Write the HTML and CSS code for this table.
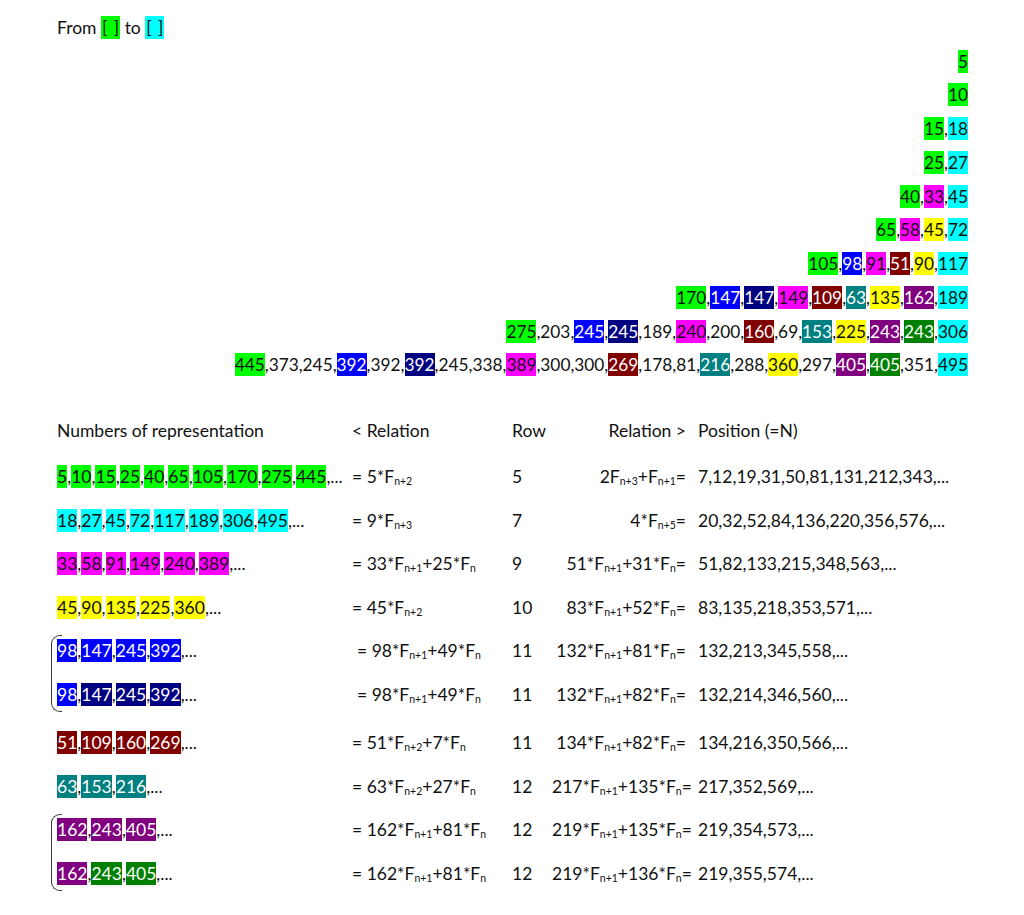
FILE: index.html
```html
<!DOCTYPE html>
<html>
<head>
<meta charset="utf-8">
<link rel="stylesheet" href="styles.css">
</head>
<body>
<div class="page">
  <div class="from">From <span class="h g blank">[ ]</span> to <span class="h c blank">[ ]</span></div>

  <div class="pyramid">
    <div class="prow"><span class="h g">5</span></div>
    <div class="prow"><span class="h g">10</span></div>
    <div class="prow"><span class="h g">15</span>,<span class="h c">18</span></div>
    <div class="prow"><span class="h g">25</span>,<span class="h c">27</span></div>
    <div class="prow"><span class="h g">40</span>,<span class="h m">33</span>,<span class="h c">45</span></div>
    <div class="prow"><span class="h g">65</span>,<span class="h m">58</span>,<span class="h y">45</span>,<span class="h c">72</span></div>
    <div class="prow"><span class="h g">105</span>,<span class="h b">98</span>,<span class="h m">91</span>,<span class="h mr">51</span>,<span class="h y">90</span>,<span class="h c">117</span></div>
    <div class="prow"><span class="h g">170</span>,<span class="h b">147</span>,<span class="h nv">147</span>,<span class="h m">149</span>,<span class="h mr">109</span>,<span class="h t">63</span>,<span class="h y">135</span>,<span class="h p">162</span>,<span class="h c">189</span></div>
    <div class="prow"><span class="h g">275</span>,203,<span class="h b">245</span>,<span class="h nv">245</span>,189,<span class="h m">240</span>,200,<span class="h mr">160</span>,69,<span class="h t">153</span>,<span class="h y">225</span>,<span class="h p">243</span>,<span class="h dg">243</span>,<span class="h c">306</span></div>
    <div class="prow"><span class="h g">445</span>,373,245,<span class="h b">392</span>,392,<span class="h nv">392</span>,245,338,<span class="h m">389</span>,300,300,<span class="h mr">269</span>,178,81,<span class="h t">216</span>,288,<span class="h y">360</span>,297,<span class="h p">405</span>,<span class="h dg">405</span>,351,<span class="h c">495</span></div>
  </div>

  <div class="table">
    <div class="trow head">
      <div>Numbers of representation</div>
      <div>&lt; Relation</div>
      <div>Row</div>
      <div class="rel">Relation &gt;</div>
      <div class="pos">Position (=N)</div>
    </div>

    <div class="trow">
      <div><span class="h g">5</span>,<span class="h g">10</span>,<span class="h g">15</span>,<span class="h g">25</span>,<span class="h g">40</span>,<span class="h g">65</span>,<span class="h g">105</span>,<span class="h g">170</span>,<span class="h g">275</span>,<span class="h g">445</span>,...</div>
      <div>= 5*F<sub>n+2</sub></div>
      <div>5</div>
      <div class="rel">2F<sub>n+3</sub>+F<sub>n+1</sub>=</div>
      <div class="pos">7,12,19,31,50,81,131,212,343,...</div>
    </div>

    <div class="trow">
      <div><span class="h c">18</span>,<span class="h c">27</span>,<span class="h c">45</span>,<span class="h c">72</span>,<span class="h c">117</span>,<span class="h c">189</span>,<span class="h c">306</span>,<span class="h c">495</span>,...</div>
      <div>= 9*F<sub>n+3</sub></div>
      <div>7</div>
      <div class="rel">4*F<sub>n+5</sub>=</div>
      <div class="pos">20,32,52,84,136,220,356,576,...</div>
    </div>

    <div class="trow">
      <div><span class="h m">33</span>,<span class="h m">58</span>,<span class="h m">91</span>,<span class="h m">149</span>,<span class="h m">240</span>,<span class="h m">389</span>,...</div>
      <div>= 33*F<sub>n+1</sub>+25*F<sub>n</sub></div>
      <div>9</div>
      <div class="rel">51*F<sub>n+1</sub>+31*F<sub>n</sub>=</div>
      <div class="pos">51,82,133,215,348,563,...</div>
    </div>

    <div class="trow">
      <div><span class="h y">45</span>,<span class="h y">90</span>,<span class="h y">135</span>,<span class="h y">225</span>,<span class="h y">360</span>,...</div>
      <div>= 45*F<sub>n+2</sub></div>
      <div>10</div>
      <div class="rel">83*F<sub>n+1</sub>+52*F<sub>n</sub>=</div>
      <div class="pos">83,135,218,353,571,...</div>
    </div>

    <div class="group">
      <div class="trow">
        <div><span class="h b">98</span>,<span class="h b">147</span>,<span class="h b">245</span>,<span class="h b">392</span>,...</div>
        <div class="shift">= 98*F<sub>n+1</sub>+49*F<sub>n</sub></div>
        <div>11</div>
        <div class="rel">132*F<sub>n+1</sub>+81*F<sub>n</sub>=</div>
        <div class="pos">132,213,345,558,...</div>
      </div>
      <div class="trow">
        <div><span class="h b">98</span>,<span class="h nv">147</span>,<span class="h nv">245</span>,<span class="h nv">392</span>,...</div>
        <div class="shift">= 98*F<sub>n+1</sub>+49*F<sub>n</sub></div>
        <div>11</div>
        <div class="rel">132*F<sub>n+1</sub>+82*F<sub>n</sub>=</div>
        <div class="pos">132,214,346,560,...</div>
      </div>
    </div>

    <div class="trow gap">
      <div><span class="h mr">51</span>,<span class="h mr">109</span>,<span class="h mr">160</span>,<span class="h mr">269</span>,...</div>
      <div>= 51*F<sub>n+2</sub>+7*F<sub>n</sub></div>
      <div>11</div>
      <div class="rel">134*F<sub>n+1</sub>+82*F<sub>n</sub>=</div>
      <div class="pos">134,216,350,566,...</div>
    </div>

    <div class="trow">
      <div><span class="h t">63</span>,<span class="h t">153</span>,<span class="h t">216</span>,...</div>
      <div>= 63*F<sub>n+2</sub>+27*F<sub>n</sub></div>
      <div>12</div>
      <div class="rel">217*F<sub>n+1</sub>+135*F<sub>n</sub>=</div>
      <div class="pos">217,352,569,...</div>
    </div>

    <div class="group">
      <div class="trow">
        <div><span class="h p">162</span>,<span class="h p">243</span>,<span class="h p">405</span>,...</div>
        <div>= 162*F<sub>n+1</sub>+81*F<sub>n</sub></div>
        <div>12</div>
        <div class="rel">219*F<sub>n+1</sub>+135*F<sub>n</sub>=</div>
        <div class="pos">219,354,573,...</div>
      </div>
      <div class="trow">
        <div><span class="h p">162</span>,<span class="h dg">243</span>,<span class="h dg">405</span>,...</div>
        <div>= 162*F<sub>n+1</sub>+81*F<sub>n</sub></div>
        <div>12</div>
        <div class="rel">219*F<sub>n+1</sub>+136*F<sub>n</sub>=</div>
        <div class="pos">219,355,574,...</div>
      </div>
    </div>
  </div>
</div>
</body>
</html>
```

FILE: styles.css
```css
html, body {
  margin: 0;
  padding: 0;
  background: #ffffff;
}

.page {
  font-family: Lato, "Liberation Sans", sans-serif;
  font-size: 17.5px;
  color: #111111;
  padding-top: 10.5px;
}

.from {
  height: 33.75px;
  display: flex;
  align-items: center;
  padding-left: 57px;
  white-space: pre;
}

.h {
  display: inline-block;
  height: 23px;
  line-height: 23px;
}

.blank {
  padding: 0 1px;
  word-spacing: 2px;
}

.g { background: #00ff00; }
.c { background: #00ffff; }
.m { background: #ff00ff; }
.y { background: #ffff00; }
.b { background: #0000ff; color: #ffffff; }
.nv { background: #000080; color: #ffffff; }
.mr { background: #800000; color: #ffffff; }
.t { background: #008080; color: #ffffff; }
.p { background: #800080; color: #ffffff; }
.dg { background: #008000; color: #ffffff; }

.pyramid {
  display: flex;
  flex-direction: column;
  align-items: flex-end;
  padding-right: 56px;
  font-size: 17.28px;
}

.prow {
  height: 33.75px;
  display: flex;
  align-items: center;
  white-space: pre;
}

.table {
  margin-top: 27px;
  padding-left: 57px;
}

.trow {
  display: grid;
  grid-template-columns: 295px 160px 40px 134px 1fr;
  align-items: center;
  height: 43.5px;
  white-space: nowrap;
}

.trow.head {
  height: 44px;
  margin-bottom: 2px;
}

.trow.gap {
  margin-top: 5px;
}

.rel {
  text-align: right;
}

.pos {
  padding-left: 12px;
}

.shift {
  padding-left: 5px;
}

sub {
  font-size: 0.6em;
  vertical-align: -0.2em;
  line-height: 0;
}

.group {
  position: relative;
}

.group::before {
  content: "";
  position: absolute;
  left: -6px;
  top: 6px;
  bottom: 4px;
  width: 10px;
  border: 1.5px solid #3a3a3a;
  border-right: none;
  border-radius: 9px 0 0 9px;
}
```
